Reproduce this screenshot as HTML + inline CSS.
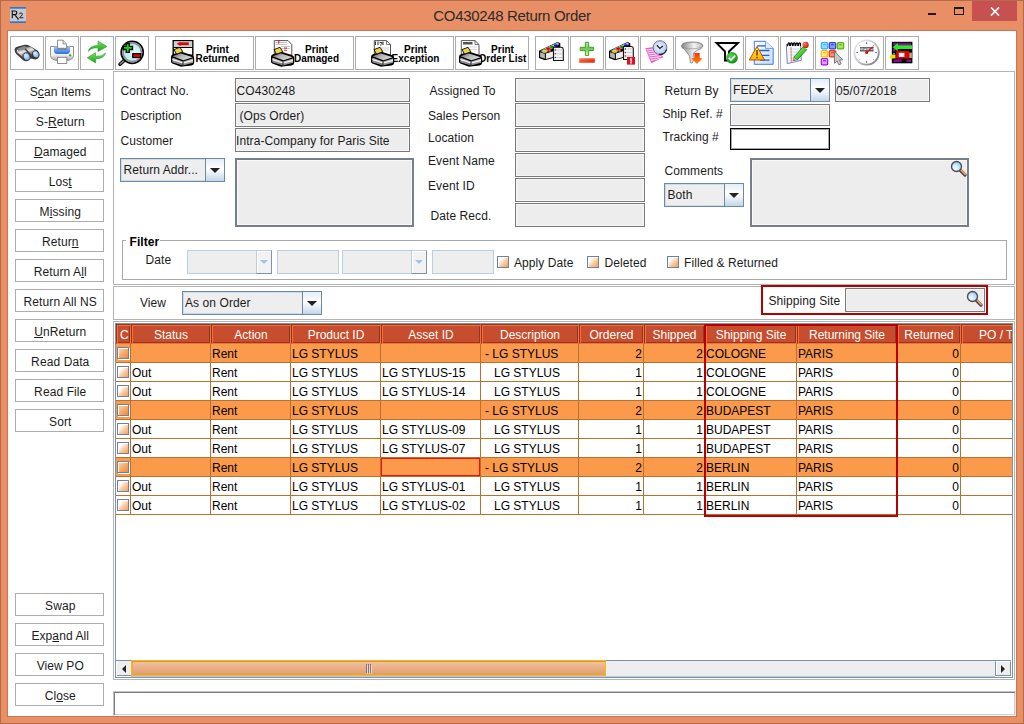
<!DOCTYPE html><html><head><meta charset="utf-8"><style>
*{margin:0;padding:0}
html,body{width:1024px;height:724px;overflow:hidden}
body{position:relative;background:#E98F66;font-family:"Liberation Sans",sans-serif;}
.a{position:absolute;box-sizing:border-box}
.t{font-size:12px;line-height:14px;color:#1c1c1c;white-space:nowrap;letter-spacing:0.08px}
.tb{border:1px solid #ADADAD;background:#fff}
.lb{border:1px solid #ADADAD;background:#fff;font-size:12px;line-height:14px;color:#1c1c1c;text-align:center;white-space:nowrap;padding-left:1.5px;letter-spacing:0.1px}
.fld{background:#EDEDED;border:1px solid #7A7A7A;box-shadow:inset 0 0 0 1px #F6F6F6}
.pnl{border:1px solid #B4B4B4}
.u{text-decoration:underline}
u{text-decoration:underline;text-underline-offset:1px;text-decoration-thickness:1px}
.pt{font-size:10px;font-weight:bold;line-height:9px;text-align:center;color:#000;white-space:nowrap}
.hc{background:#C64D2D;border-left:1px solid #8B3A22;border-top:1px solid #8B3A22;border-right:1px solid #FF6C38;border-bottom:1px solid #FF6C38;box-shadow:inset 1px 1px 0 #FF6C38,inset -1px -1px 0 #8B3A22;color:#fff;font-size:12px;line-height:14px;text-align:center;padding-top:3px;white-space:nowrap;overflow:hidden}
.tc{font-size:12px;line-height:14px;color:#000;white-space:nowrap}
.ta{background:#EDEDED;border:1px solid #6F8499;box-shadow:inset 0 0 0 1px #7C7C7C,inset 0 0 0 2px #F8F8F8}

.cb{background:#EEEEEE;border:1px solid #7088A0;box-shadow:inset 0 0 0 1px #C8DCF0}
.cbb{border:1px solid #7088A0;background:linear-gradient(#E4EDF7 0%,#FFFFFF 45%,#C2D6EA 100%)}
.tri{width:0;height:0;border-left:5px solid transparent;border-right:5px solid transparent;border-top:5px solid #222}
.dcb{background:#EEEEEE;border:1px solid #B9CFE4}
.dcbb{border:1px solid #B9CFE4;border-right-color:#7F93A8;border-bottom-color:#7F93A8;background:#F2F2F2;box-shadow:inset 1px 1px 0 #fff}
.dtri{width:0;height:0;border-left:4px solid transparent;border-right:4px solid transparent;border-top:4px solid #A9C3DD}
.dfld{background:#EEEEEE;border:1px solid #B9CFE4}
.chk{border:1px solid #6F8299;box-shadow:inset 1px 1px 0 #fff;background:linear-gradient(135deg,#fff 25%,#F9C9A0 60%,#F6A060 100%)}
.chko{border:1px solid #6F8299;box-shadow:inset 1px 1px 0 #fff,1px 1px 0 #fff;background:linear-gradient(135deg,#F9D0B0 10%,#F8A868 55%,#F08A38 100%)}

</style></head><body>
<div class="a " style="left:0px;top:0px;width:1024px;height:724px;border:1px solid #B56A4A"></div>
<div class="a " style="left:7px;top:30px;width:1010px;height:687px;background:#fff;border:1px solid #CC7450"></div>
<div class="a" style="left:0;top:6px;width:1024px;text-align:center;font-size:15px;letter-spacing:-0.33px;line-height:20px;color:#2b2b2b">CO430248 Return Order</div>
<div class="a " style="left:972px;top:1px;width:45px;height:20px;background:#C75050"></div>
<svg class="a" style="left:990px;top:7px" width="10" height="9" viewBox="0 0 10 9"><path d="M1 0.5 L9 8.5 M9 0.5 L1 8.5" stroke="#fff" stroke-width="1.7"/></svg>
<div class="a " style="left:954px;top:7px;width:10px;height:8px;border:1px solid #1a1a1a;border-top-width:2px"></div>
<div class="a " style="left:928px;top:13px;width:8px;height:2px;background:#1a1a1a"></div>
<svg class="a" style="left:10px;top:7px" width="16" height="16" viewBox="0 0 16 16"><rect width="16" height="16" fill="#C6CACF"/><rect width="16" height="1.7" fill="#2F78C6"/><rect y="14.3" width="16" height="1.7" fill="#2F78C6"/><path d="M2.3 4 V11.3 M1.5 4 H4.8 Q6.8 4 6.8 5.9 Q6.8 7.6 4.8 7.6 H2.3 M4.6 7.6 L8.6 12.3" stroke="#111" stroke-width="1.1" fill="none"/><path d="M9.2 7.2 Q9.8 5.8 11.3 6 Q12.8 6.3 12.2 7.9 L9.6 10.8 H13.4" stroke="#222" stroke-width="1" fill="none"/><rect x="7.3" y="12.3" width="1" height="1" fill="#4466aa"/></svg>
<div class="a tb" style="left:10px;top:36px;width:34px;height:34px;"></div>
<svg class="a" style="left:10px;top:36px" width="34" height="34" viewBox="0 0 34 34">
<defs><linearGradient id="bgr" x1="0" y1="0" x2="0.3" y2="1"><stop offset="0" stop-color="#707070"/><stop offset="0.45" stop-color="#e8e8e8"/><stop offset="1" stop-color="#5a5a5a"/></linearGradient>
<radialGradient id="lens" cx="0.45" cy="0.35" r="0.7"><stop offset="0" stop-color="#e0f0ff"/><stop offset="1" stop-color="#6aa0ec"/></radialGradient></defs>
<path d="M4.6 13.5 Q5 10.8 9 10.2 L14.5 8.8 Q17 8.3 19.5 9.8 L27.5 14.5 Q29.5 16 29.3 19 L28.3 22 Q26.5 24 24 23.2 L19.5 22.3 L18.5 24.3 Q16.5 25.8 13.5 24.6 L6.5 18.3 Q4.4 16.2 4.6 13.5Z" fill="#3c3c3c"/>
<path d="M6.3 15.5 L13.5 12.3 L19.5 18.8 L14.8 23.3 Z" fill="url(#bgr)"/>
<path d="M14.8 11.2 L20.5 10.6 L26.4 15.2 L22 19.5 Z" fill="url(#bgr)"/>
<path d="M6 13.2 L14 10 L18.5 11.5 L12 14.3 Z" fill="#8a8a8a"/>
<circle cx="7.5" cy="14.5" r="0.7" fill="#fff"/>
<ellipse cx="16.6" cy="20.6" rx="3.4" ry="4" transform="rotate(-20 16.6 20.6)" fill="url(#lens)" stroke="#333" stroke-width="0.9"/>
<ellipse cx="25.8" cy="18.3" rx="3.1" ry="3.8" transform="rotate(-20 25.8 18.3)" fill="url(#lens)" stroke="#333" stroke-width="0.9"/>
</svg>
<div class="a tb" style="left:45px;top:36px;width:34px;height:34px;"></div>
<svg class="a" style="left:45px;top:36px" width="34" height="34" viewBox="0 0 34 34">
<defs><linearGradient id="pbody" x1="0" y1="0" x2="0" y2="1"><stop offset="0" stop-color="#ffffff"/><stop offset="0.6" stop-color="#f0f0f0"/><stop offset="1" stop-color="#a8a8a8"/></linearGradient>
<linearGradient id="ptray" x1="0" y1="0" x2="0" y2="1"><stop offset="0" stop-color="#9cc4f8"/><stop offset="1" stop-color="#2f6fe0"/></linearGradient></defs>
<path d="M5.5 10.5 H28.5 V19.5 Q28 24 22 24.5 H12 Q6 24 5.5 19.5 Z" fill="url(#pbody)" stroke="#888" stroke-width="0.9"/>
<path d="M9 10.5 H25 V15.5 Q24.5 18 22 18 H12 Q9.5 18 9 15.5 Z" fill="url(#ptray)"/>
<rect x="12.5" y="12.3" width="9.5" height="1.4" fill="#77808c"/>
<path d="M12.5 4.2 H18 L21.6 8 V12.3 H12.5 Z" fill="#fff" stroke="#777" stroke-width="0.8"/>
<path d="M18 4.2 V8 H21.6" fill="#ddd" stroke="#777" stroke-width="0.7"/>
<circle cx="25.2" cy="19.4" r="1.1" fill="#2aa02a"/>
<rect x="12.5" y="21.3" width="9.3" height="6.2" fill="#fff" stroke="#777" stroke-width="0.8"/>
</svg>
<div class="a tb" style="left:80px;top:36px;width:34px;height:34px;"></div>
<svg class="a" style="left:80px;top:36px" width="34" height="34" viewBox="0 0 34 34">
<defs><linearGradient id="gar" x1="0" y1="0" x2="0" y2="1"><stop offset="0" stop-color="#7ae06a"/><stop offset="1" stop-color="#1fa01f"/></linearGradient></defs>
<path d="M8.3 15.5 Q9 10 18 9.2 L18 5 L27 10.5 L18 15.6 L18 11.8 Q11 11.5 8.3 15.5Z" fill="url(#gar)" stroke="#189018" stroke-width="0.5"/>
<path d="M25.5 17 Q24.5 22.5 15.6 23 L15.6 27 L7.2 21.8 L15.6 16.5 L15.6 20.5 Q22.5 20.5 25.5 17Z" fill="url(#gar)" stroke="#189018" stroke-width="0.5"/>
</svg>
<div class="a tb" style="left:115px;top:36px;width:34px;height:34px;"></div>
<svg class="a" style="left:115px;top:36px" width="34" height="34" viewBox="0 0 34 34">
<defs><radialGradient id="zg" cx="0.6" cy="0.5" r="0.6"><stop offset="0" stop-color="#dcfcff"/><stop offset="1" stop-color="#b0e2ea"/></radialGradient></defs>
<path d="M9.3 24.2 L5 28.3" stroke="#111" stroke-width="3.6" stroke-linecap="round"/>
<path d="M9 24.5 L5.2 28" stroke="#9a9a9a" stroke-width="1.1" stroke-linecap="round"/>
<circle cx="17.2" cy="16.3" r="11" fill="url(#zg)" stroke="#000" stroke-width="1.7"/>
<circle cx="17.2" cy="16.3" r="9.6" fill="none" stroke="#9a9a9a" stroke-width="1.2"/>
<circle cx="17.2" cy="16.3" r="8.8" fill="none" stroke="#555" stroke-width="0.5"/>
<path d="M11.2 7.6 H14.3 V10.4 H17.5 V13.5 H14.3 V16.4 H11.2 V13.5 H8.3 V10.4 H11.2 Z" fill="#00e61e" stroke="#000" stroke-width="1.3" stroke-linejoin="miter"/>
<rect x="17.7" y="17.7" width="8" height="3.8" fill="#ee0000" stroke="#000" stroke-width="1.2"/>
</svg>
<div class="a tb" style="left:155px;top:36px;width:99px;height:34px;"></div>
<div class="a pt" style="left:177.4px;top:44.5px;width:80px">Print<br>Returned</div>
<svg class="a" style="left:171px;top:40px" width="24" height="27" viewBox="0 0 24 27"><rect x="2.2" y="0.7" width="19.6" height="14.5" fill="#fff" stroke="#000" stroke-width="1.4"/>
<rect x="2.9" y="1.4" width="18.2" height="5.8" fill="#d0d0d0"/>
<path d="M2.9 7.5 H21.1" stroke="#000" stroke-width="1"/>
<path d="M6 3.8 L9.3 1.9 V2.6 H17.6 V5 H9.3 V5.7 Z" fill="#f00000" stroke="#600" stroke-width="0.3"/>
<defs><linearGradient id="prbreturned" x1="0" y1="0" x2="1" y2="0.6"><stop offset="0" stop-color="#5a5a5a"/><stop offset="0.5" stop-color="#b8b8b8"/><stop offset="1" stop-color="#d8d8d8"/></linearGradient>
<linearGradient id="prfreturned" x1="0" y1="0" x2="0" y2="1"><stop offset="0" stop-color="#c8c8c8"/><stop offset="1" stop-color="#8a8a8a"/></linearGradient></defs>
<path d="M0 16.8 Q0 15 2 14.3 L9 11.8 Q10 11.5 11.5 12 L21.8 15.6 Q23.2 16.3 23.2 18.5 V22.8 Q23.2 24.8 20.5 25.4 L11.5 26.6 Q9.8 26.8 8 26.1 L1.3 23.6 Q0 23 0 21.6 Z" fill="#000"/>
<path d="M1.6 16.2 L9.5 13.3 L21.6 17.3 L12.5 20.2 Z" fill="url(#prbreturned)"/>
<path d="M1.4 17.8 L12 21.4 L22 18.6 V22.7 L12 25.4 L1.4 22.2 Z" fill="url(#prfreturned)"/>
<path d="M1.5 19.6 L12 23 L22 20.4" stroke="#f4f4f4" stroke-width="1.1" fill="none"/>
<path d="M1.5 21.2 L12 24.5" stroke="#666" stroke-width="0.6" fill="none"/>
<path d="M12 21.6 V25.3" stroke="#111" stroke-width="0.9"/>
<path d="M3 9.6 L9 7.3 L11.8 11.8 L5.6 14.2 Z" fill="#f4d040" stroke="#000" stroke-width="0.9"/>
</svg>
<div class="a tb" style="left:255px;top:36px;width:99px;height:34px;"></div>
<div class="a pt" style="left:276.5px;top:44.5px;width:80px">Print<br>Damaged</div>
<svg class="a" style="left:271px;top:40px" width="24" height="27" viewBox="0 0 24 27"><path d="M3.3 0.6 H17 L20.8 4.5 V15 H3.3 Z" fill="#fff" stroke="#555" stroke-width="1"/>
<path d="M4.5 2.5 H16 M4.5 4.5 H16 M10 6.5 H19 M10 8.5 H19" stroke="#aaa" stroke-width="0.7"/>
<rect x="7.3" y="0.2" width="1" height="3.5" fill="#e00000"/><rect x="13" y="7.6" width="3" height="0.9" fill="#e00000"/><rect x="13" y="9.8" width="3" height="0.9" fill="#e00000"/>
<defs><linearGradient id="prbdamaged" x1="0" y1="0" x2="1" y2="0.6"><stop offset="0" stop-color="#5a5a5a"/><stop offset="0.5" stop-color="#b8b8b8"/><stop offset="1" stop-color="#d8d8d8"/></linearGradient>
<linearGradient id="prfdamaged" x1="0" y1="0" x2="0" y2="1"><stop offset="0" stop-color="#c8c8c8"/><stop offset="1" stop-color="#8a8a8a"/></linearGradient></defs>
<path d="M0 16.8 Q0 15 2 14.3 L9 11.8 Q10 11.5 11.5 12 L21.8 15.6 Q23.2 16.3 23.2 18.5 V22.8 Q23.2 24.8 20.5 25.4 L11.5 26.6 Q9.8 26.8 8 26.1 L1.3 23.6 Q0 23 0 21.6 Z" fill="#000"/>
<path d="M1.6 16.2 L9.5 13.3 L21.6 17.3 L12.5 20.2 Z" fill="url(#prbdamaged)"/>
<path d="M1.4 17.8 L12 21.4 L22 18.6 V22.7 L12 25.4 L1.4 22.2 Z" fill="url(#prfdamaged)"/>
<path d="M1.5 19.6 L12 23 L22 20.4" stroke="#f4f4f4" stroke-width="1.1" fill="none"/>
<path d="M1.5 21.2 L12 24.5" stroke="#666" stroke-width="0.6" fill="none"/>
<path d="M12 21.6 V25.3" stroke="#111" stroke-width="0.9"/>
<path d="M3 9.6 L9 7.3 L11.8 11.8 L5.6 14.2 Z" fill="#f4d040" stroke="#000" stroke-width="0.9"/>
</svg>
<div class="a tb" style="left:355px;top:36px;width:99px;height:34px;"></div>
<div class="a pt" style="left:375.5px;top:44.5px;width:80px">Print<br>Exception</div>
<svg class="a" style="left:371px;top:40px" width="24" height="27" viewBox="0 0 24 27"><path d="M3.3 0.6 H15.5 L19.5 4.5 V15 H3.3 Z" fill="#fff" stroke="#555" stroke-width="1"/>
<path d="M15.5 0.6 V4.5 H19.5" fill="none" stroke="#555" stroke-width="0.8"/>
<path d="M4.5 1.5 V5 M7 1.5 V5 M12 1.5 V5" stroke="#333" stroke-width="1"/>
<text x="8" y="5.8" font-size="6" font-weight="bold" font-family="Liberation Sans" fill="#000">?</text>
<path d="M9 8 H18 M9 10 H18" stroke="#bbb" stroke-width="0.7"/>
<defs><linearGradient id="prbexception" x1="0" y1="0" x2="1" y2="0.6"><stop offset="0" stop-color="#5a5a5a"/><stop offset="0.5" stop-color="#b8b8b8"/><stop offset="1" stop-color="#d8d8d8"/></linearGradient>
<linearGradient id="prfexception" x1="0" y1="0" x2="0" y2="1"><stop offset="0" stop-color="#c8c8c8"/><stop offset="1" stop-color="#8a8a8a"/></linearGradient></defs>
<path d="M0 16.8 Q0 15 2 14.3 L9 11.8 Q10 11.5 11.5 12 L21.8 15.6 Q23.2 16.3 23.2 18.5 V22.8 Q23.2 24.8 20.5 25.4 L11.5 26.6 Q9.8 26.8 8 26.1 L1.3 23.6 Q0 23 0 21.6 Z" fill="#000"/>
<path d="M1.6 16.2 L9.5 13.3 L21.6 17.3 L12.5 20.2 Z" fill="url(#prbexception)"/>
<path d="M1.4 17.8 L12 21.4 L22 18.6 V22.7 L12 25.4 L1.4 22.2 Z" fill="url(#prfexception)"/>
<path d="M1.5 19.6 L12 23 L22 20.4" stroke="#f4f4f4" stroke-width="1.1" fill="none"/>
<path d="M1.5 21.2 L12 24.5" stroke="#666" stroke-width="0.6" fill="none"/>
<path d="M12 21.6 V25.3" stroke="#111" stroke-width="0.9"/>
<path d="M3 9.6 L9 7.3 L11.8 11.8 L5.6 14.2 Z" fill="#f4d040" stroke="#000" stroke-width="0.9"/>
</svg>
<div class="a tb" style="left:455px;top:36px;width:74px;height:34px;"></div>
<div class="a pt" style="left:462.5px;top:44.5px;width:80px">Print<br>Order List</div>
<svg class="a" style="left:459px;top:40px" width="24" height="27" viewBox="0 0 24 27"><path d="M2.3 0.6 H16 L20 4.5 V15 H2.3 Z" fill="#fff" stroke="#555" stroke-width="1"/>
<path d="M16 0.6 V4.5 H20" fill="none" stroke="#555" stroke-width="0.8"/>
<rect x="4" y="2" width="9.5" height="2.5" fill="#555"/>
<path d="M9 7 H18 M9 9.5 H18" stroke="#ccc" stroke-width="0.8"/>
<defs><linearGradient id="prborderlist" x1="0" y1="0" x2="1" y2="0.6"><stop offset="0" stop-color="#5a5a5a"/><stop offset="0.5" stop-color="#b8b8b8"/><stop offset="1" stop-color="#d8d8d8"/></linearGradient>
<linearGradient id="prforderlist" x1="0" y1="0" x2="0" y2="1"><stop offset="0" stop-color="#c8c8c8"/><stop offset="1" stop-color="#8a8a8a"/></linearGradient></defs>
<path d="M0 16.8 Q0 15 2 14.3 L9 11.8 Q10 11.5 11.5 12 L21.8 15.6 Q23.2 16.3 23.2 18.5 V22.8 Q23.2 24.8 20.5 25.4 L11.5 26.6 Q9.8 26.8 8 26.1 L1.3 23.6 Q0 23 0 21.6 Z" fill="#000"/>
<path d="M1.6 16.2 L9.5 13.3 L21.6 17.3 L12.5 20.2 Z" fill="url(#prborderlist)"/>
<path d="M1.4 17.8 L12 21.4 L22 18.6 V22.7 L12 25.4 L1.4 22.2 Z" fill="url(#prforderlist)"/>
<path d="M1.5 19.6 L12 23 L22 20.4" stroke="#f4f4f4" stroke-width="1.1" fill="none"/>
<path d="M1.5 21.2 L12 24.5" stroke="#666" stroke-width="0.6" fill="none"/>
<path d="M12 21.6 V25.3" stroke="#111" stroke-width="0.9"/>
<path d="M3 9.6 L9 7.3 L11.8 11.8 L5.6 14.2 Z" fill="#f4d040" stroke="#000" stroke-width="0.9"/>
</svg>
<div class="a tb" style="left:535px;top:36px;width:34px;height:34px;"></div>
<svg class="a" style="left:535px;top:36px" width="34" height="34" viewBox="0 0 34 34">
<path d="M4 14.8 L22.5 6 L25.3 7.3 L25.3 11.5 L18.8 19.3 V21.8 L10 24.2 L4 22 Z" fill="#000"/>
<path d="M5.1 16.2 L9.9 17.8 V22.8 L5.1 21.1 Z" fill="#b4b4b4"/>
<path d="M10.9 17.6 L18.2 15.2 V21 L10.9 23.1 Z" fill="#ececec"/>
<path d="M5 15.1 L22.6 7.1 L24.4 8.3 L10.3 16.9 Z" fill="#9c9c9c"/>
<path d="M8 13.6 L23 6.8 M11 12.3 L23.5 7.6" stroke="#e8e8e8" stroke-width="0.6"/>
<ellipse cx="9.6" cy="15.3" rx="2.8" ry="1.8" fill="#f4ec40" stroke="#555" stroke-width="0.5"/>
<ellipse cx="9.6" cy="15.5" rx="1.2" ry="0.7" fill="#c8b820"/>
<ellipse cx="13.2" cy="12.6" rx="1.9" ry="1.4" fill="#e80000"/>
<rect x="13.6" y="13.3" width="2.2" height="2.4" fill="#f46a6a" stroke="#b00" stroke-width="0.4"/>
<ellipse cx="17" cy="11" rx="1.9" ry="1.2" fill="#0a9a0a"/>
<ellipse cx="20.8" cy="9.4" rx="2" ry="1.1" fill="#0c14d8"/>

<path d="M18.5 11.3 H26.5 Q28.3 11.5 28.3 13.5 V24.5 H18.5 Z" fill="#f4f4f4" stroke="#111" stroke-width="1.1"/>
<circle cx="20.3" cy="14" r="0.7" fill="#333"/><circle cx="20.3" cy="17.8" r="0.7" fill="#333"/><circle cx="20.3" cy="21.5" r="0.7" fill="#333"/>
<path d="M21.5 14 H27 M21.5 17.8 H27 M21.5 21.5 H27" stroke="#bbb" stroke-width="0.7"/>
</svg>
<div class="a tb" style="left:570px;top:36px;width:34px;height:34px;"></div>
<svg class="a" style="left:570px;top:36px" width="34" height="34" viewBox="0 0 34 34">
<defs><linearGradient id="pmg" x1="0" y1="0" x2="0" y2="1"><stop offset="0" stop-color="#b8e8a8"/><stop offset="0.5" stop-color="#70c850"/><stop offset="1" stop-color="#e8f8b0"/></linearGradient>
<linearGradient id="mmg" x1="0" y1="0" x2="1" y2="1"><stop offset="0" stop-color="#ff7a50"/><stop offset="1" stop-color="#e02000"/></linearGradient></defs>
<path d="M15.3 6.3 H18.7 V11.3 H23.6 V14.5 H18.7 V19.4 H15.3 V14.5 H10.2 V11.3 H15.3 Z" fill="url(#pmg)" stroke="#2a9a1a" stroke-width="0.9"/>
<rect x="9.2" y="22.2" width="15.6" height="4.5" fill="url(#mmg)" rx="0.5"/>
</svg>
<div class="a tb" style="left:605px;top:36px;width:34px;height:34px;"></div>
<svg class="a" style="left:605px;top:36px" width="34" height="34" viewBox="0 0 34 34">
<path d="M4 14.8 L22.5 6 L25.3 7.3 L25.3 11.5 L18.8 19.3 V21.8 L10 24.2 L4 22 Z" fill="#000"/>
<path d="M5.1 16.2 L9.9 17.8 V22.8 L5.1 21.1 Z" fill="#b4b4b4"/>
<path d="M10.9 17.6 L18.2 15.2 V21 L10.9 23.1 Z" fill="#ececec"/>
<path d="M5 15.1 L22.6 7.1 L24.4 8.3 L10.3 16.9 Z" fill="#9c9c9c"/>
<path d="M8 13.6 L23 6.8 M11 12.3 L23.5 7.6" stroke="#e8e8e8" stroke-width="0.6"/>
<ellipse cx="9.6" cy="15.3" rx="2.8" ry="1.8" fill="#f4ec40" stroke="#555" stroke-width="0.5"/>
<ellipse cx="9.6" cy="15.5" rx="1.2" ry="0.7" fill="#c8b820"/>
<ellipse cx="13.2" cy="12.6" rx="1.9" ry="1.4" fill="#e80000"/>
<rect x="13.6" y="13.3" width="2.2" height="2.4" fill="#f46a6a" stroke="#b00" stroke-width="0.4"/>
<ellipse cx="17" cy="11" rx="1.9" ry="1.2" fill="#0a9a0a"/>
<ellipse cx="20.8" cy="9.4" rx="2" ry="1.1" fill="#0c14d8"/>

<path d="M18.5 10.5 H26.5 Q28.3 10.7 28.3 12.7 V23.5 H18.5 Z" fill="#f4f4f4" stroke="#111" stroke-width="1.1"/>
<circle cx="20.3" cy="13" r="0.7" fill="#333"/><circle cx="20.3" cy="16.5" r="0.7" fill="#333"/><circle cx="20.3" cy="20" r="0.7" fill="#333"/>
<path d="M21.5 13 H27 M21.5 16.5 H27 M21.5 20 H27" stroke="#bbb" stroke-width="0.7"/>
<rect x="22" y="21" width="8" height="7.6" fill="#dd1122"/>
<rect x="25.2" y="22.3" width="1.6" height="3.3" fill="#fff"/><rect x="25.2" y="26.2" width="1.6" height="1.3" fill="#fff"/>
</svg>
<div class="a tb" style="left:640px;top:36px;width:34px;height:34px;"></div>
<svg class="a" style="left:640px;top:36px" width="34" height="34" viewBox="0 0 34 34">
<defs><radialGradient id="clk" cx="0.45" cy="0.45" r="0.6"><stop offset="0" stop-color="#f4faff"/><stop offset="1" stop-color="#a4c4ee"/></radialGradient></defs>
<path d="M5.2 12.3 L13.5 11 L23.3 21.3 L11.3 27.2 Z" fill="#e860c8"/>
<path d="M6.3 13.6 L13.8 12.5 L14.6 13.4 L6.8 14.6 Z M7.2 15.6 L15.5 14.3 L16.4 15.3 L7.7 16.6 Z M8.1 17.6 L17.3 16.2 L18.2 17.2 L8.6 18.6 Z M9 19.6 L19.1 18.1 L20 19.1 L9.5 20.6 Z M9.9 21.6 L20.9 20 L21.6 20.9 L10.4 22.6 Z M10.8 23.6 L21.5 22 L21.2 22.4 L11.3 24.8 Z" fill="#fde6f6"/>
<circle cx="20" cy="11.6" r="6.9" fill="url(#clk)" stroke="#7a5a9a" stroke-width="0.9"/>
<path d="M26.6 13.5 A7 7 0 0 1 19 18.4" stroke="#222" stroke-width="1.3" fill="none"/>
<path d="M16.9 9.2 L19.9 12.4 L22.8 9.9" stroke="#222" stroke-width="1.3" fill="none"/>
</svg>
<div class="a tb" style="left:675px;top:36px;width:34px;height:34px;"></div>
<svg class="a" style="left:675px;top:36px" width="34" height="34" viewBox="0 0 34 34">
<defs><linearGradient id="fng" x1="0" y1="0" x2="1" y2="0"><stop offset="0" stop-color="#8a8a8a"/><stop offset="0.6" stop-color="#f4f4f4"/><stop offset="1" stop-color="#c0c0c0"/></linearGradient>
<linearGradient id="fab" x1="0" y1="0" x2="0" y2="1"><stop offset="0" stop-color="#ff3000"/><stop offset="1" stop-color="#ff8a10"/></linearGradient></defs>
<path d="M6.5 10 Q6.5 6 17 6 Q28 6 28 10 Q27 13 22 14.5 L18.5 17 L18 26 Q17 27.8 15.3 26.5 L14.5 20 L9.5 13.5 Q6.5 12 6.5 10Z" fill="url(#fng)" stroke="#777" stroke-width="0.7"/>
<ellipse cx="17.2" cy="9.6" rx="10" ry="3.2" fill="url(#fng)" stroke="#888" stroke-width="0.6"/>
<path d="M19.3 17 H24.7 V22.3 H27.6 L22 28 L16.3 22.3 H19.3 Z" fill="url(#fab)"/>
</svg>
<div class="a tb" style="left:710px;top:36px;width:34px;height:34px;"></div>
<svg class="a" style="left:710px;top:36px" width="34" height="34" viewBox="0 0 34 34">
<defs><radialGradient id="chk" cx="0.4" cy="0.35" r="0.7"><stop offset="0" stop-color="#60d060"/><stop offset="1" stop-color="#0a8a0a"/></radialGradient></defs>
<path d="M6.5 7 H28 L19 15.5 V24.5 H15 V15.5 Z" fill="#fff" stroke="#000" stroke-width="1.9" stroke-linejoin="miter"/>
<circle cx="22" cy="21.8" r="5.8" fill="url(#chk)"/>
<path d="M18.8 21.8 L21 24 L25.2 19.6" stroke="#fff" stroke-width="1.6" fill="none"/>
</svg>
<div class="a tb" style="left:745px;top:36px;width:34px;height:34px;"></div>
<svg class="a" style="left:745px;top:36px" width="34" height="34" viewBox="0 0 34 34">
<defs><linearGradient id="wdl" x1="0" y1="0" x2="1" y2="1"><stop offset="0" stop-color="#ffffff"/><stop offset="1" stop-color="#c8dcf8"/></linearGradient>
<linearGradient id="wtri" x1="0" y1="0" x2="0" y2="1"><stop offset="0" stop-color="#ffee40"/><stop offset="1" stop-color="#ffb000"/></linearGradient></defs>
<path d="M9.3 5.3 H20.5 L28.2 12.5 V28.3 H9.3 Z" fill="url(#wdl)" stroke="#2a70d8" stroke-width="0.9"/>
<path d="M20.5 5.3 V12.5 H28.2" fill="#e0ecfa" stroke="#4a88e0" stroke-width="0.7"/>
<path d="M12 9.8 H20.5 M14 14.5 H24.5 M15 19.3 H24.5 M15 24.2 H24.5" stroke="#2060d0" stroke-width="1.3"/>
<path d="M12 10.5 L19.6 24 H4.3 Z" fill="url(#wtri)" stroke="#b04010" stroke-width="0.9" stroke-linejoin="round"/>
<rect x="11.3" y="14" width="1.4" height="5.5" fill="#902010"/><rect x="11.3" y="20.8" width="1.4" height="1.5" fill="#902010"/>
</svg>
<div class="a tb" style="left:780px;top:36px;width:34px;height:34px;"></div>
<svg class="a" style="left:780px;top:36px" width="34" height="34" viewBox="0 0 34 34">
<defs><linearGradient id="pen" x1="0" y1="0" x2="1" y2="1"><stop offset="0" stop-color="#a0ff80"/><stop offset="0.5" stop-color="#50d030"/><stop offset="1" stop-color="#108010"/></linearGradient>
<radialGradient id="eras" cx="0.35" cy="0.35" r="0.7"><stop offset="0" stop-color="#ff8060"/><stop offset="1" stop-color="#c01800"/></radialGradient></defs>
<path d="M6.3 8.5 L20.5 7.8 L21.3 24.3 L7.3 27.6 Z" fill="#fafcff" stroke="#7a78c8" stroke-width="1"/>
<path d="M8.5 13 H20 M8.7 16 H20.2 M8.9 19 H20.4 M9.1 22 H20.6 M9.3 24.8 H18" stroke="#a8d4f4" stroke-width="0.7"/>
<path d="M11 11 L11.4 26.5" stroke="#f08060" stroke-width="1"/>
<path d="M7.6 10.2 Q7.8 6.3 9.3 7 Q10.2 7.5 9.6 10 M10.3 10 Q10.5 6.2 12 7 Q12.9 7.5 12.3 10 M13 10 Q13.2 6.2 14.7 7 Q15.6 7.5 15 10 M15.7 10 Q15.9 6.2 17.4 7 Q18.3 7.5 17.7 10 M18.4 10 Q18.6 6.2 20.1 7 Q21 7.5 20.4 10" stroke="#000" stroke-width="1.2" fill="none"/>
<path d="M13.8 21.2 L23.2 10.6 L26.8 13.6 L17.3 24 Z" fill="url(#pen)" stroke="#0a6a0a" stroke-width="0.7"/>
<path d="M13.8 21.2 L13 24.6 L17.3 24 Z" fill="#e8c8a0" stroke="#555" stroke-width="0.4"/>
<path d="M13 24.6 L14 23.3 L15 24.3 Z" fill="#222"/>
<path d="M22.3 9.8 L24.4 8 L28 11 L26 13 Z" fill="#e0e0e0"/>
<circle cx="25.6" cy="8.9" r="3.1" fill="url(#eras)"/>
</svg>
<div class="a tb" style="left:815px;top:36px;width:34px;height:34px;"></div>
<svg class="a" style="left:815px;top:36px" width="34" height="34" viewBox="0 0 34 34">
<rect x="6.3" y="6.5" width="6.4" height="6.3" rx="1" fill="#9ad8ff" stroke="#28b0ff" stroke-width="1.2"/><rect x="8.1" y="8.0" width="2.8" height="1.3" fill="#40b8ff"/>
<rect x="14.3" y="6.5" width="6.4" height="6.3" rx="1" fill="#8a9af0" stroke="#2a40d8" stroke-width="1.2"/><rect x="16.1" y="8.0" width="2.8" height="1.3" fill="#3a50e0"/>
<rect x="22.3" y="6.5" width="6.4" height="6.3" rx="1" fill="#a8e070" stroke="#58b010" stroke-width="1.2"/><rect x="24.1" y="8.0" width="2.8" height="1.3" fill="#60b820"/>
<rect x="6.3" y="14.5" width="6.4" height="6.3" rx="1" fill="#ffe890" stroke="#ffb800" stroke-width="1.2"/><rect x="8.1" y="16.0" width="2.8" height="1.3" fill="#ffc000"/>
<rect x="14.3" y="14.5" width="6.4" height="6.3" rx="1" fill="#f89080" stroke="#e83010" stroke-width="1.2"/><rect x="16.1" y="16.0" width="2.8" height="1.3" fill="#e84020"/>
<rect x="6.3" y="22.5" width="6.4" height="6.3" rx="1" fill="#d8a0f8" stroke="#a010e8" stroke-width="1.2"/><rect x="8.1" y="24.0" width="2.8" height="1.3" fill="#a020f0"/>
<path d="M19.5 15.3 V27.3 L22 25 L23.8 28.8 L26.2 27.8 L24.5 24.2 L27.8 23.8 Z" fill="#c8c8c8" stroke="#707070" stroke-width="0.9"/>
</svg>
<div class="a tb" style="left:850px;top:36px;width:34px;height:34px;"></div>
<svg class="a" style="left:850px;top:36px" width="34" height="34" viewBox="0 0 34 34">
<defs><linearGradient id="gring" x1="0" y1="0" x2="1" y2="1"><stop offset="0" stop-color="#f0f0f0"/><stop offset="0.5" stop-color="#c8c8c8"/><stop offset="1" stop-color="#6a6a6a"/></linearGradient>
<linearGradient id="grect" x1="0" y1="0" x2="0" y2="1"><stop offset="0" stop-color="#5a5a5a"/><stop offset="0.5" stop-color="#a8a8a8"/><stop offset="1" stop-color="#3a3a3a"/></linearGradient></defs>
<circle cx="16.6" cy="16.5" r="12.2" fill="#fff" stroke="url(#gring)" stroke-width="1.8"/>
<rect x="10" y="11" width="13.6" height="4.4" fill="url(#grect)"/>
<path d="M11 13 H13 M14 13.5 H16 M17 13 H19 M20 13.5 H22" stroke="#dcdcdc" stroke-width="0.9"/>
<path d="M16.6 16.5 L23.3 10.6" stroke="#d01010" stroke-width="1.1"/>
<circle cx="16.6" cy="16.6" r="1.5" fill="#e00000"/>
<g fill="#3050b0"><rect x="16.1" y="6.3" width="1" height="1.7"/><rect x="16.1" y="25" width="1" height="1.7"/><rect x="6.4" y="16.1" width="1.7" height="0.9"/><rect x="25.2" y="16.1" width="1.7" height="0.9"/>
<rect x="9.5" y="9" width="0.7" height="0.7"/><rect x="23" y="23" width="0.7" height="0.7"/><rect x="9.5" y="23" width="0.7" height="0.7"/><rect x="23" y="9" width="0.7" height="0.7"/></g>
</svg>
<div class="a tb" style="left:885px;top:36px;width:34px;height:34px;"></div>
<svg class="a" style="left:885px;top:36px" width="34" height="34" viewBox="0 0 34 34">
<rect x="6.8" y="5.8" width="20.6" height="21.5" fill="#000"/>
<rect x="8.2" y="7.2" width="17.8" height="2.2" fill="#a800b8"/>
<rect x="8.2" y="12.5" width="2.2" height="3" fill="#a800b8"/>
<rect x="8.5" y="23.6" width="8" height="2.2" fill="#a800b8"/>
<rect x="21.5" y="23.6" width="4.5" height="2.2" fill="#a800b8"/>
<path d="M7.6 11.2 L12.8 7 V9.3 H27 V13 H12.8 V15.2 Z" fill="#20f020"/>
<rect x="11.2" y="14.8" width="13" height="7.8" fill="#e00000"/>
<rect x="13.8" y="16.8" width="5.6" height="4.2" fill="#f4f4f4"/>
<rect x="24.3" y="16.6" width="2.6" height="5.5" fill="#c8a878"/>
<path d="M4.8 21 L6.5 18.5 H10.5 V22.5 H4.8 Z" fill="#f0e000"/>
<rect x="8.2" y="16.8" width="1.5" height="1.5" fill="#40c0e0"/>
</svg>
<div class="a lb" style="left:15px;top:79px;width:89px;height:23px;padding-top:5px">S<u>c</u>an Items</div>
<div class="a lb" style="left:15px;top:109px;width:89px;height:23px;padding-top:5px">S-<u>R</u>eturn</div>
<div class="a lb" style="left:15px;top:139px;width:89px;height:23px;padding-top:5px"><u>D</u>amaged</div>
<div class="a lb" style="left:15px;top:169px;width:89px;height:23px;padding-top:5px">Los<u>t</u></div>
<div class="a lb" style="left:15px;top:199px;width:89px;height:23px;padding-top:5px">M<u>i</u>ssing</div>
<div class="a lb" style="left:15px;top:229px;width:89px;height:23px;padding-top:5px">Retur<u>n</u></div>
<div class="a lb" style="left:15px;top:259px;width:89px;height:23px;padding-top:5px">Return A<u>l</u>l</div>
<div class="a lb" style="left:15px;top:289px;width:89px;height:23px;padding-top:5px">Return All NS</div>
<div class="a lb" style="left:15px;top:319px;width:89px;height:23px;padding-top:5px"><u>U</u>nReturn</div>
<div class="a lb" style="left:15px;top:349px;width:89px;height:23px;padding-top:5px">Read Data</div>
<div class="a lb" style="left:15px;top:379px;width:89px;height:23px;padding-top:5px">Read File</div>
<div class="a lb" style="left:15px;top:409px;width:89px;height:23px;padding-top:5px">Sort</div>
<div class="a lb" style="left:15px;top:593px;width:89px;height:23px;padding-top:5px">Swap</div>
<div class="a lb" style="left:15px;top:623px;width:89px;height:23px;padding-top:5px">Exp<u>a</u>nd All</div>
<div class="a lb" style="left:15px;top:653px;width:89px;height:23px;padding-top:5px">View PO</div>
<div class="a lb" style="left:15px;top:683px;width:89px;height:23px;padding-top:5px">Cl<u>o</u>se</div>
<div class="a pnl" style="left:113px;top:71px;width:902px;height:214px;"></div>
<div class="a pnl" style="left:113px;top:286px;width:902px;height:34px;"></div>
<div class="a pnl" style="left:113px;top:321px;width:902px;height:359px;"></div>
<div class="a " style="left:115px;top:323px;width:898px;height:355px;border:1px solid #7D93AA"></div>
<div class="a " style="left:113px;top:691px;width:903px;height:25px;border:1px solid #C4C4C4;border-right-color:#E4E4E4;border-bottom-color:#FFFFFF;box-shadow:inset 1px 1px 0 #7C7C7C,inset -1px -1px 0 #CFCFCF"></div>
<div class="a t" style="left:120.5px;top:84px;">Contract No.</div>
<div class="a t" style="left:120.5px;top:109px;">Description</div>
<div class="a t" style="left:120.5px;top:134px;">Customer</div>
<div class="a t" style="left:429.5px;top:84px;">Assigned To</div>
<div class="a t" style="left:428px;top:109px;">Sales Person</div>
<div class="a t" style="left:428px;top:131px;">Location</div>
<div class="a t" style="left:428px;top:154px;">Event Name</div>
<div class="a t" style="left:428px;top:179px;">Event ID</div>
<div class="a t" style="left:430.5px;top:209px;">Date Recd.</div>
<div class="a t" style="left:664.5px;top:84px;">Return By</div>
<div class="a t" style="left:662.5px;top:107px;">Ship Ref. #</div>
<div class="a t" style="left:662.5px;top:130px;">Tracking #</div>
<div class="a t" style="left:664.5px;top:164px;">Comments</div>
<div class="a fld" style="left:235px;top:78px;width:175px;height:24px;"></div>
<div class="a fld" style="left:235px;top:103px;width:175px;height:24px;"></div>
<div class="a fld" style="left:235px;top:128px;width:175px;height:24px;"></div>
<div class="a fld" style="left:515px;top:78px;width:130px;height:24px;"></div>
<div class="a fld" style="left:515px;top:103px;width:130px;height:24px;"></div>
<div class="a fld" style="left:515px;top:128px;width:130px;height:24px;"></div>
<div class="a fld" style="left:515px;top:153px;width:130px;height:24px;"></div>
<div class="a fld" style="left:515px;top:178px;width:130px;height:24px;"></div>
<div class="a fld" style="left:515px;top:203px;width:130px;height:24px;"></div>
<div class="a ta" style="left:235px;top:158px;width:179px;height:69px;"></div>
<div class="a ta" style="left:750px;top:158px;width:219px;height:69px;"></div>
<div class="a fld" style="left:835px;top:78px;width:95px;height:24px;"></div>
<div class="a fld" style="left:730px;top:104px;width:100px;height:22px;"></div>
<div class="a " style="left:730px;top:128px;width:100px;height:22px;border:1px solid #000;box-shadow:inset 0 0 0 1px rgba(0,0,0,0.35);background:#fff"></div>
<div class="a cb" style="left:120px;top:158px;width:105px;height:24px"></div>
<div class="a cbb" style="left:205px;top:158px;width:20px;height:24px"></div>
<div class="a tri" style="left:210.0px;top:167.5px"></div>
<div class="a t" style="left:123.5px;top:163px;">Return Addr...</div>
<div class="a cb" style="left:730px;top:78px;width:100px;height:24px"></div>
<div class="a cbb" style="left:810px;top:78px;width:20px;height:24px"></div>
<div class="a tri" style="left:815.0px;top:87.5px"></div>
<div class="a t" style="left:733px;top:83px;">FEDEX</div>
<div class="a cb" style="left:664px;top:183px;width:80px;height:24px"></div>
<div class="a cbb" style="left:724px;top:183px;width:20px;height:24px"></div>
<div class="a tri" style="left:729.0px;top:192.5px"></div>
<div class="a t" style="left:667.5px;top:188px;">Both</div>
<div class="a cb" style="left:182px;top:291px;width:140px;height:24px"></div>
<div class="a cbb" style="left:302px;top:291px;width:20px;height:24px"></div>
<div class="a tri" style="left:307.0px;top:300.5px"></div>
<div class="a t" style="left:185px;top:296px;">As on Order</div>
<div class="a t" style="left:236.5px;top:84px;">CO430248</div>
<div class="a t" style="left:239.5px;top:109px;">(Ops Order)</div>
<div class="a t" style="left:236px;top:134px;">Intra-Company for Paris Site</div>
<div class="a t" style="left:836px;top:84px;">05/07/2018</div>
<div class="a " style="left:122px;top:240px;width:885px;height:40px;border:1px solid #A8A8A8"></div>
<div class="a " style="left:126px;top:234px;width:34px;height:12px;background:#fff"></div>
<div class="a t" style="left:129.5px;top:235px;font-weight:bold;color:#000">Filter</div>
<div class="a t" style="left:145.5px;top:253px;">Date</div>
<div class="a dcb" style="left:187px;top:250px;width:85px;height:24px"></div>
<div class="a dcbb" style="left:256px;top:250px;width:16px;height:24px"></div>
<div class="a dtri" style="left:260.0px;top:260.0px"></div>
<div class="a dfld" style="left:277px;top:250px;width:62px;height:24px;"></div>
<div class="a dcb" style="left:342px;top:250px;width:85px;height:24px"></div>
<div class="a dcbb" style="left:411px;top:250px;width:16px;height:24px"></div>
<div class="a dtri" style="left:415.0px;top:260.0px"></div>
<div class="a dfld" style="left:432px;top:250px;width:62px;height:24px;"></div>
<div class="a chk" style="left:497px;top:256px;width:12px;height:12px;"></div>
<div class="a t" style="left:514px;top:256px;">Apply Date</div>
<div class="a chk" style="left:587px;top:256px;width:12px;height:12px;"></div>
<div class="a t" style="left:604.5px;top:256px;">Deleted</div>
<div class="a chk" style="left:667px;top:256px;width:12px;height:12px;"></div>
<div class="a t" style="left:684px;top:256px;">Filled &amp; Returned</div>
<div class="a t" style="left:140px;top:296px;">View</div>
<div class="a " style="left:761px;top:285px;width:227px;height:30px;border:2px solid #B40000"></div>
<div class="a t" style="left:768.5px;top:294px;">Shipping Site</div>
<div class="a fld" style="left:845px;top:288px;width:140px;height:24px;"></div>
<div class="a" style="left:116px;top:324px;width:896px;height:336px;overflow:hidden;background:#fff">
<div class="a hc" style="left:0px;top:0;width:15px;height:20px;text-align:left;padding-left:3px">C</div>
<div class="a hc" style="left:15px;top:0;width:80px;height:20px">Status</div>
<div class="a hc" style="left:95px;top:0;width:80px;height:20px">Action</div>
<div class="a hc" style="left:175px;top:0;width:90px;height:20px">Product ID</div>
<div class="a hc" style="left:265px;top:0;width:100px;height:20px">Asset ID</div>
<div class="a hc" style="left:365px;top:0;width:98px;height:20px">Description</div>
<div class="a hc" style="left:463px;top:0;width:65px;height:20px">Ordered</div>
<div class="a hc" style="left:528px;top:0;width:61px;height:20px">Shipped</div>
<div class="a hc" style="left:589px;top:0;width:92px;height:20px">Shipping Site</div>
<div class="a hc" style="left:681px;top:0;width:100px;height:20px">Returning Site</div>
<div class="a hc" style="left:781px;top:0;width:64px;height:20px">Returned</div>
<div class="a hc" style="left:845px;top:0;width:80px;height:20px;text-align:left;padding-left:17px">PO / T</div>
<div class="a" style="left:0;top:20px;width:896px;height:19px;background:#FB9A4A;border-bottom:1px solid #B8712F"></div>
<div class="a chko" style="left:1px;top:23px;width:12px;height:12px"></div>
<div class="a tc" style="left:96px;top:23px">Rent</div>
<div class="a tc" style="left:176px;top:23px">LG STYLUS</div>
<div class="a tc" style="left:369px;top:23px">- LG STYLUS</div>
<div class="a tc" style="left:463px;top:23px;width:63px;text-align:right">2</div>
<div class="a tc" style="left:528px;top:23px;width:59px;text-align:right">2</div>
<div class="a tc" style="left:590px;top:23px">COLOGNE</div>
<div class="a tc" style="left:682px;top:23px">PARIS</div>
<div class="a tc" style="left:781px;top:23px;width:62px;text-align:right">0</div>
<div class="a" style="left:0;top:39px;width:896px;height:19px;background:#fff;border-bottom:1px solid #B8712F"></div>
<div class="a chk" style="left:1px;top:42px;width:12px;height:12px"></div>
<div class="a tc" style="left:16px;top:42px">Out</div>
<div class="a tc" style="left:96px;top:42px">Rent</div>
<div class="a tc" style="left:176px;top:42px">LG STYLUS</div>
<div class="a tc" style="left:266px;top:42px">LG STYLUS-15</div>
<div class="a tc" style="left:378px;top:42px">LG STYLUS</div>
<div class="a tc" style="left:463px;top:42px;width:63px;text-align:right">1</div>
<div class="a tc" style="left:528px;top:42px;width:59px;text-align:right">1</div>
<div class="a tc" style="left:590px;top:42px">COLOGNE</div>
<div class="a tc" style="left:682px;top:42px">PARIS</div>
<div class="a tc" style="left:781px;top:42px;width:62px;text-align:right">0</div>
<div class="a" style="left:0;top:58px;width:896px;height:19px;background:#fff;border-bottom:1px solid #B8712F"></div>
<div class="a chk" style="left:1px;top:61px;width:12px;height:12px"></div>
<div class="a tc" style="left:16px;top:61px">Out</div>
<div class="a tc" style="left:96px;top:61px">Rent</div>
<div class="a tc" style="left:176px;top:61px">LG STYLUS</div>
<div class="a tc" style="left:266px;top:61px">LG STYLUS-14</div>
<div class="a tc" style="left:378px;top:61px">LG STYLUS</div>
<div class="a tc" style="left:463px;top:61px;width:63px;text-align:right">1</div>
<div class="a tc" style="left:528px;top:61px;width:59px;text-align:right">1</div>
<div class="a tc" style="left:590px;top:61px">COLOGNE</div>
<div class="a tc" style="left:682px;top:61px">PARIS</div>
<div class="a tc" style="left:781px;top:61px;width:62px;text-align:right">0</div>
<div class="a" style="left:0;top:77px;width:896px;height:19px;background:#FB9A4A;border-bottom:1px solid #B8712F"></div>
<div class="a chko" style="left:1px;top:80px;width:12px;height:12px"></div>
<div class="a tc" style="left:96px;top:80px">Rent</div>
<div class="a tc" style="left:176px;top:80px">LG STYLUS</div>
<div class="a tc" style="left:369px;top:80px">- LG STYLUS</div>
<div class="a tc" style="left:463px;top:80px;width:63px;text-align:right">2</div>
<div class="a tc" style="left:528px;top:80px;width:59px;text-align:right">2</div>
<div class="a tc" style="left:590px;top:80px">BUDAPEST</div>
<div class="a tc" style="left:682px;top:80px">PARIS</div>
<div class="a tc" style="left:781px;top:80px;width:62px;text-align:right">0</div>
<div class="a" style="left:0;top:96px;width:896px;height:19px;background:#fff;border-bottom:1px solid #B8712F"></div>
<div class="a chk" style="left:1px;top:99px;width:12px;height:12px"></div>
<div class="a tc" style="left:16px;top:99px">Out</div>
<div class="a tc" style="left:96px;top:99px">Rent</div>
<div class="a tc" style="left:176px;top:99px">LG STYLUS</div>
<div class="a tc" style="left:266px;top:99px">LG STYLUS-09</div>
<div class="a tc" style="left:378px;top:99px">LG STYLUS</div>
<div class="a tc" style="left:463px;top:99px;width:63px;text-align:right">1</div>
<div class="a tc" style="left:528px;top:99px;width:59px;text-align:right">1</div>
<div class="a tc" style="left:590px;top:99px">BUDAPEST</div>
<div class="a tc" style="left:682px;top:99px">PARIS</div>
<div class="a tc" style="left:781px;top:99px;width:62px;text-align:right">0</div>
<div class="a" style="left:0;top:115px;width:896px;height:19px;background:#fff;border-bottom:1px solid #B8712F"></div>
<div class="a chk" style="left:1px;top:118px;width:12px;height:12px"></div>
<div class="a tc" style="left:16px;top:118px">Out</div>
<div class="a tc" style="left:96px;top:118px">Rent</div>
<div class="a tc" style="left:176px;top:118px">LG STYLUS</div>
<div class="a tc" style="left:266px;top:118px">LG STYLUS-07</div>
<div class="a tc" style="left:378px;top:118px">LG STYLUS</div>
<div class="a tc" style="left:463px;top:118px;width:63px;text-align:right">1</div>
<div class="a tc" style="left:528px;top:118px;width:59px;text-align:right">1</div>
<div class="a tc" style="left:590px;top:118px">BUDAPEST</div>
<div class="a tc" style="left:682px;top:118px">PARIS</div>
<div class="a tc" style="left:781px;top:118px;width:62px;text-align:right">0</div>
<div class="a" style="left:0;top:134px;width:896px;height:19px;background:#FB9A4A;border-bottom:1px solid #B8712F"></div>
<div class="a chko" style="left:1px;top:137px;width:12px;height:12px"></div>
<div class="a tc" style="left:96px;top:137px">Rent</div>
<div class="a tc" style="left:176px;top:137px">LG STYLUS</div>
<div class="a tc" style="left:369px;top:137px">- LG STYLUS</div>
<div class="a tc" style="left:463px;top:137px;width:63px;text-align:right">2</div>
<div class="a tc" style="left:528px;top:137px;width:59px;text-align:right">2</div>
<div class="a tc" style="left:590px;top:137px">BERLIN</div>
<div class="a tc" style="left:682px;top:137px">PARIS</div>
<div class="a tc" style="left:781px;top:137px;width:62px;text-align:right">0</div>
<div class="a" style="left:0;top:153px;width:896px;height:19px;background:#fff;border-bottom:1px solid #B8712F"></div>
<div class="a chk" style="left:1px;top:156px;width:12px;height:12px"></div>
<div class="a tc" style="left:16px;top:156px">Out</div>
<div class="a tc" style="left:96px;top:156px">Rent</div>
<div class="a tc" style="left:176px;top:156px">LG STYLUS</div>
<div class="a tc" style="left:266px;top:156px">LG STYLUS-01</div>
<div class="a tc" style="left:378px;top:156px">LG STYLUS</div>
<div class="a tc" style="left:463px;top:156px;width:63px;text-align:right">1</div>
<div class="a tc" style="left:528px;top:156px;width:59px;text-align:right">1</div>
<div class="a tc" style="left:590px;top:156px">BERLIN</div>
<div class="a tc" style="left:682px;top:156px">PARIS</div>
<div class="a tc" style="left:781px;top:156px;width:62px;text-align:right">0</div>
<div class="a" style="left:0;top:172px;width:896px;height:19px;background:#fff;border-bottom:1px solid #B8712F"></div>
<div class="a chk" style="left:1px;top:175px;width:12px;height:12px"></div>
<div class="a tc" style="left:16px;top:175px">Out</div>
<div class="a tc" style="left:96px;top:175px">Rent</div>
<div class="a tc" style="left:176px;top:175px">LG STYLUS</div>
<div class="a tc" style="left:266px;top:175px">LG STYLUS-02</div>
<div class="a tc" style="left:378px;top:175px">LG STYLUS</div>
<div class="a tc" style="left:463px;top:175px;width:63px;text-align:right">1</div>
<div class="a tc" style="left:528px;top:175px;width:59px;text-align:right">1</div>
<div class="a tc" style="left:590px;top:175px">BERLIN</div>
<div class="a tc" style="left:682px;top:175px">PARIS</div>
<div class="a tc" style="left:781px;top:175px;width:62px;text-align:right">0</div>
<div class="a" style="left:14px;top:20px;width:1px;height:171px;background:#B8712F"></div>
<div class="a" style="left:94px;top:20px;width:1px;height:171px;background:#B8712F"></div>
<div class="a" style="left:174px;top:20px;width:1px;height:171px;background:#B8712F"></div>
<div class="a" style="left:264px;top:20px;width:1px;height:171px;background:#B8712F"></div>
<div class="a" style="left:364px;top:20px;width:1px;height:171px;background:#B8712F"></div>
<div class="a" style="left:462px;top:20px;width:1px;height:171px;background:#B8712F"></div>
<div class="a" style="left:527px;top:20px;width:1px;height:171px;background:#B8712F"></div>
<div class="a" style="left:588px;top:20px;width:1px;height:171px;background:#B8712F"></div>
<div class="a" style="left:680px;top:20px;width:1px;height:171px;background:#B8712F"></div>
<div class="a" style="left:780px;top:20px;width:1px;height:171px;background:#B8712F"></div>
<div class="a" style="left:844px;top:20px;width:1px;height:171px;background:#B8712F"></div>
<div class="a" style="left:924px;top:20px;width:1px;height:171px;background:#B8712F"></div>
</div>
<div class="a " style="left:381px;top:458px;width:99px;height:18px;border:1px solid #F01010"></div>
<div class="a " style="left:704px;top:324px;width:194px;height:193px;border:2px solid #B80000"></div>
<div class="a " style="left:116px;top:660px;width:896px;height:17px;background:#EEEEEE;border-top:1px solid #7C90A8;box-shadow:inset 0 -1px 0 #B4CCE4"></div>
<div class="a " style="left:116px;top:661px;width:15px;height:16px;background:#EEEEEE;border-left:1px solid #fff;border-bottom:1px solid #fff;box-shadow:inset 0 -1px 0 #7C90A8"></div>
<div class="a" style="left:122px;top:665px;width:0;height:0;border-top:4px solid transparent;border-bottom:4px solid transparent;border-right:4px solid #222"></div>
<div class="a " style="left:995px;top:661px;width:16px;height:15px;background:#EEEEEE;border-top:1px solid #fff;border-left:1px solid #7C90A8;border-right:1px solid #7C90A8;border-bottom:1px solid #7C90A8;box-shadow:inset 1px 0 0 #fff"></div>
<div class="a " style="left:995px;top:676px;width:17px;height:1px;background:#fff"></div>
<div class="a " style="left:1011px;top:660px;width:1px;height:17px;background:#fff"></div>
<div class="a" style="left:1001px;top:665px;width:0;height:0;border-top:4px solid transparent;border-bottom:4px solid transparent;border-left:4px solid #222"></div>
<div class="a " style="left:131px;top:660px;width:475px;height:16px;border:1px solid #F8BC00;background:linear-gradient(#F0C5A0,#E39B6B);box-shadow:inset 0 1px 0 #E08C55,inset 1px 0 0 #E8A070"></div>
<div class="a " style="left:366px;top:664px;width:1px;height:9px;background:#7A7090"></div>
<div class="a " style="left:367px;top:665px;width:1px;height:9px;background:#F6D6BE"></div>
<div class="a " style="left:368px;top:664px;width:1px;height:9px;background:#7A7090"></div>
<div class="a " style="left:369px;top:665px;width:1px;height:9px;background:#F6D6BE"></div>
<div class="a " style="left:370px;top:664px;width:1px;height:9px;background:#7A7090"></div>
<div class="a " style="left:371px;top:665px;width:1px;height:9px;background:#F6D6BE"></div>
<svg class="a" style="left:949.5px;top:159.5px" width="17" height="17" viewBox="0 0 17 17"><defs><radialGradient id="mgg0" cx="0.4" cy="0.65" r="0.65"><stop offset="0" stop-color="#ffffff"/><stop offset="1" stop-color="#8fd0f4"/></radialGradient></defs><line x1="10.3" y1="10.3" x2="15" y2="15" stroke="#4a3a6a" stroke-width="3.2" stroke-linecap="round"/><line x1="10.8" y1="10" x2="15.2" y2="14.4" stroke="#f4a630" stroke-width="1.7" stroke-linecap="round"/><circle cx="6.5" cy="6.5" r="5" fill="url(#mgg0)" stroke="#4a4a5a" stroke-width="1.3"/></svg>
<svg class="a" style="left:966px;top:290px" width="17" height="17" viewBox="0 0 17 17"><defs><radialGradient id="mgg1" cx="0.4" cy="0.65" r="0.65"><stop offset="0" stop-color="#ffffff"/><stop offset="1" stop-color="#8fd0f4"/></radialGradient></defs><line x1="10.3" y1="10.3" x2="15" y2="15" stroke="#4a3a6a" stroke-width="3.2" stroke-linecap="round"/><line x1="10.8" y1="10" x2="15.2" y2="14.4" stroke="#f4a630" stroke-width="1.7" stroke-linecap="round"/><circle cx="6.5" cy="6.5" r="5" fill="url(#mgg1)" stroke="#4a4a5a" stroke-width="1.3"/></svg>
</body></html>
